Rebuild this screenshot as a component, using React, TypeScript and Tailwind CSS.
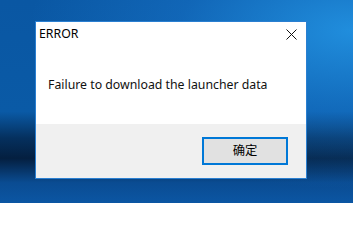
import React from 'react';

// Windows 10 style message box on a desktop background
const CloseIcon = () => (
    <svg width="11" height="11" viewBox="0 0 11 11" className="block">
        <path d="M0.5 0.5 L10.5 10.5 M10.5 0.5 L0.5 10.5" stroke="#111" strokeWidth="1" fill="none" />
    </svg>
);

const App = () => {
    return (
        <div
            className="w-[353px] h-[203px] overflow-hidden pt-[21px] pl-[35px] bg-[linear-gradient(180deg,#0a57a3_0%,#0a5aa6_55%,#05305e_68%,#041f40_78%,#0a4c92_90%,#0b56a3_100%)] relative"
            style={{ fontFamily: '"Noto Sans", "Noto Sans CJK SC", sans-serif' }}
        >
            <div className="absolute inset-0 bg-[radial-gradient(ellipse_at_100%_15%,rgba(40,160,240,0.75)_0%,rgba(30,130,220,0.35)_35%,rgba(0,0,0,0)_65%)]" />
            <div className="relative w-[272px] h-[158px] border border-[#2a7fd1] bg-white flex flex-col">
                <div className="h-[30px] flex items-start justify-between pl-[3px] pr-[9px] text-[12.3px] leading-[16px] text-black">
                    <span className="pt-[4px]">ERROR</span>
                    <span className="pt-[7px]">
                        <CloseIcon />
                    </span>
                </div>
                <div className="h-[72px] pl-[12px] pt-[25px] text-[12.3px] leading-[16px] text-[#111]">
                    Failure to download the launcher data
                </div>
                <div className="flex-1 bg-[#f0f0f0] flex justify-end items-start pt-[13px] pr-[18px]">
                    <button className="w-[86px] h-[28px] border-2 border-[#0078d7] bg-[#e1e1e1] text-[12.3px] text-black flex items-center justify-center">
                        确定
                    </button>
                </div>
            </div>
        </div>
    );
};

export default App;
